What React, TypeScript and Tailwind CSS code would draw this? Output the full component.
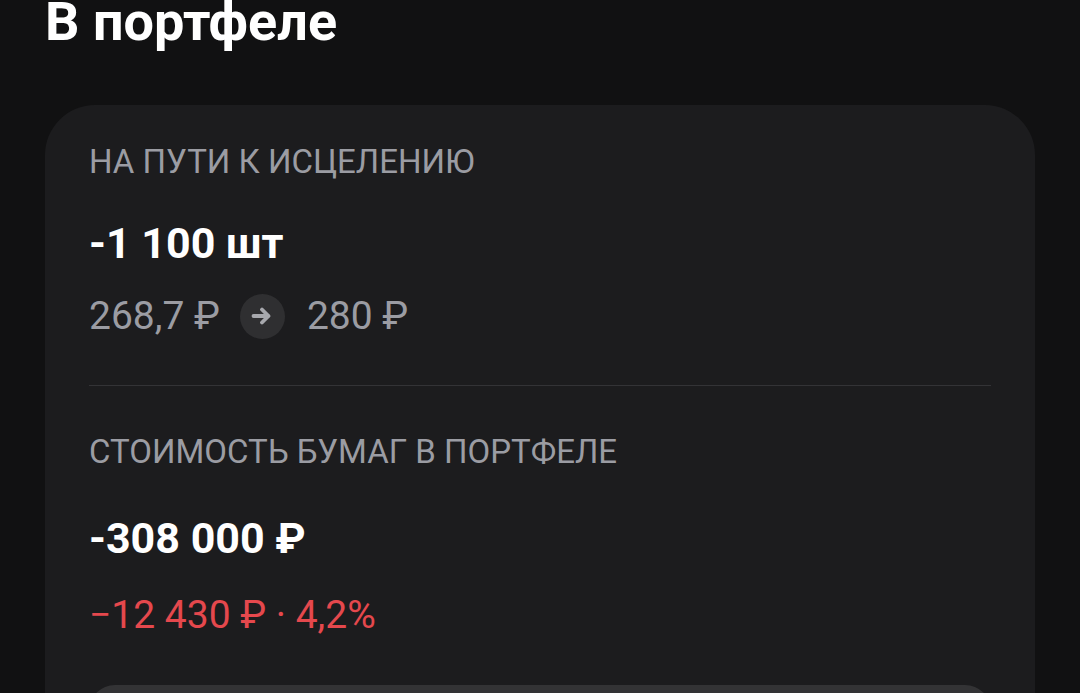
const FONT = "font-['Roboto','Liberation_Sans',sans-serif]";

function ArrowBadge() {
  return (
    <div className="flex h-[45px] w-[45px] items-center justify-center rounded-full bg-[#2f2f31]">
      <svg width="22" height="20" viewBox="0 0 22 20" fill="none">
        <path
          d="M2.5 10h15M11 3.5l6.5 6.5-6.5 6.5"
          stroke="#a7a8ad"
          strokeWidth="3.8"
          strokeLinecap="round"
          strokeLinejoin="round"
        />
      </svg>
    </div>
  );
}

export default function App() {
  return (
    <div className={`h-[693px] w-[1080px] overflow-hidden bg-[#111112] ${FONT}`}>
      <div className="pl-[45px] pr-[45px]">
        <h1 className="-mt-[10px] text-[54px] font-bold leading-[64px] text-white">В портфеле</h1>

        <div className="mt-[51px] rounded-[50px] bg-[#1c1c1e] px-[44px] pt-[37px] pb-[40px]">
          <div className="text-[33px] leading-[40px] text-[#9b9ca3]">НА ПУТИ К ИСЦЕЛЕНИЮ</div>
          <div className="mt-[36px] text-[43px] font-bold leading-[50px] text-white">-1 100 шт</div>
          <div className="mt-[24px] flex items-center text-[39px] leading-[48px] text-[#9b9ca3]">
            <span>268,7 ₽</span>
            <span className="ml-[20px] mr-[22px]">
              <ArrowBadge />
            </span>
            <span>280 ₽</span>
          </div>

          <div className="mt-[45px] h-px bg-[#333336]" />

          <div className="mt-[46px] text-[33px] leading-[40px] text-[#9b9ca3]">СТОИМОСТЬ БУМАГ В ПОРТФЕЛЕ</div>
          <div className="mt-[41px] text-[43px] font-bold leading-[50px] text-white">-308 000 ₽</div>
          <div className="mt-[28px] text-[39px] leading-[48px] text-[#e5484d]">−12 430 ₽ · 4,2%</div>

          <div className="mt-[46px] h-[60px] rounded-t-[26px] bg-[#333335]" />
        </div>
      </div>
    </div>
  );
}
